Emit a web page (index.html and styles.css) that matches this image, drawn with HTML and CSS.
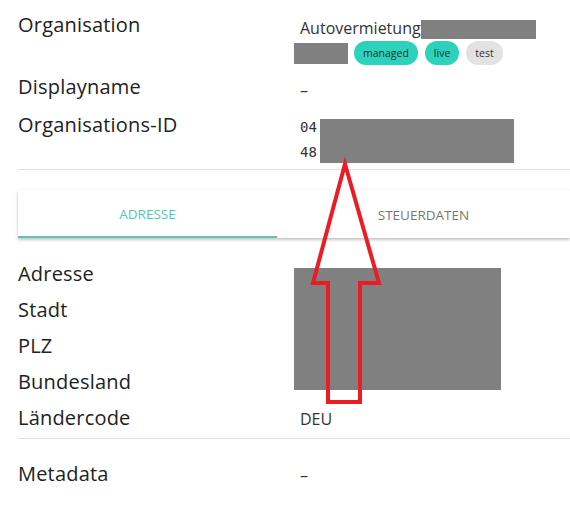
FILE: index.html
```html
<!DOCTYPE html>
<html lang="de">
<head>
<meta charset="utf-8">
<link rel="stylesheet" href="styles.css">
</head>
<body>
<div class="page">
  <div class="row row-org">
    <div class="label">Organisation</div>
    <div class="value value-org">
      <div class="org-line">Autovermietung<span class="redact redact-name"></span></div>
      <div class="chip-line">
        <span class="redact redact-small"></span>
        <span class="chip chip-teal">managed</span>
        <span class="chip chip-teal">live</span>
        <span class="chip chip-grey">test</span>
      </div>
    </div>
  </div>
  <div class="row row-display">
    <div class="label">Displayname</div>
    <div class="value value-dash">–</div>
  </div>
  <div class="row row-id">
    <div class="label">Organisations-ID</div>
    <div class="value mono">
      <div>04</div>
      <div>48</div>
      <span class="redact redact-id"></span>
    </div>
  </div>
  <div class="divider div-top"></div>

  <div class="tabs">
    <div class="tab tab-active">ADRESSE</div>
    <div class="tab">STEUERDATEN</div>
  </div>

  <div class="address">
    <div class="arow"><div class="label">Adresse</div><div class="value"></div></div>
    <div class="arow"><div class="label">Stadt</div><div class="value"></div></div>
    <div class="arow"><div class="label">PLZ</div><div class="value"></div></div>
    <div class="arow"><div class="label">Bundesland</div><div class="value"></div></div>
    <div class="arow"><div class="label">Ländercode</div><div class="value">DEU</div></div>
    <span class="redact redact-address"></span>
  </div>
  <div class="divider div-bottom"></div>
  <div class="arow arow-meta"><div class="label">Metadata</div><div class="value">–</div></div>

  <svg class="arrow" width="570" height="507" viewBox="0 0 570 507">
    <polygon points="345,164 379,283 360,283 360,402 328,402 328,283 313,283" fill="none" stroke="#ec1c24" stroke-width="4" stroke-linejoin="miter"/>
  </svg>
</div>
</body>
</html>
```
FILE: styles.css
```css
* { box-sizing: border-box; }
html, body { margin: 0; padding: 0; background: #fff; }
body { font-family: "Open Sans", "Noto Sans", sans-serif; color: #222; }
.page { position: relative; width: 570px; height: 507px; padding-left: 18px; overflow: hidden; }

.row { display: grid; grid-template-columns: 282px 1fr; }
.label { font-size: 20px; line-height: 24px; color: #222; letter-spacing: 0.2px; }
.value { font-size: 16px; line-height: 20px; color: #333; }

.row-org { padding-top: 13px; }
.value-org { padding-top: 5px; }
.org-line { display: flex; align-items: flex-start; height: 20px; }
.redact { display: inline-block; background: #808080; }
.redact-name { width: 115px; height: 19px; margin-top: 2px; }
.chip-line { display: flex; align-items: center; margin-top: 3px; margin-left: -6px; height: 24px; }
.redact-small { width: 54px; height: 21px; margin-right: 6px; }
.chip { height: 24px; line-height: 24px; border-radius: 12px; font-size: 10.5px; padding: 0 9px; color: #1f2e2c; margin-right: 7px; }
.chip-teal { background: #2dd2bd; }
.chip-grey { background: #e2e2e2; color: #333; }

.row-display { margin-top: 10px; }
.value-dash { padding-top: 5px; }

.row-id { margin-top: 13px; }
.mono { position: relative; font-family: "DejaVu Sans Mono", "Liberation Mono", monospace; font-size: 14px; line-height: 25px; padding-top: 2px; color: #333; }
.redact-id { position: absolute; left: 20px; top: 6px; width: 194px; height: 44px; }

.divider { height: 1px; background: #e0e0e0; }
.div-top { margin-top: 4px; }

.tabs { margin-top: 20px; height: 48px; display: grid; grid-template-columns: 259px 1fr; background: #fff; box-shadow: 0 2px 3px rgba(0,0,0,0.22), 0 0 2px rgba(0,0,0,0.08); }
.tab { display: flex; align-items: center; justify-content: center; font-size: 13.5px; color: #777; padding-top: 1px; }
.tab-active { color: #4ec9b5; border-bottom: 2px solid #62c3b2; }

.address { position: relative; margin-top: 18px; }
.arow { display: grid; grid-template-columns: 282px 1fr; align-items: baseline; height: 36px; }
.arow .label { line-height: 36px; }
.arow .value { line-height: 36px; }
.redact-address { position: absolute; left: 276px; top: 12px; width: 207px; height: 122px; }

.div-bottom { margin-top: 2px; }
.arow-meta { margin-top: 17px; }

.arrow { position: absolute; left: 0; top: 0; pointer-events: none; }
```
